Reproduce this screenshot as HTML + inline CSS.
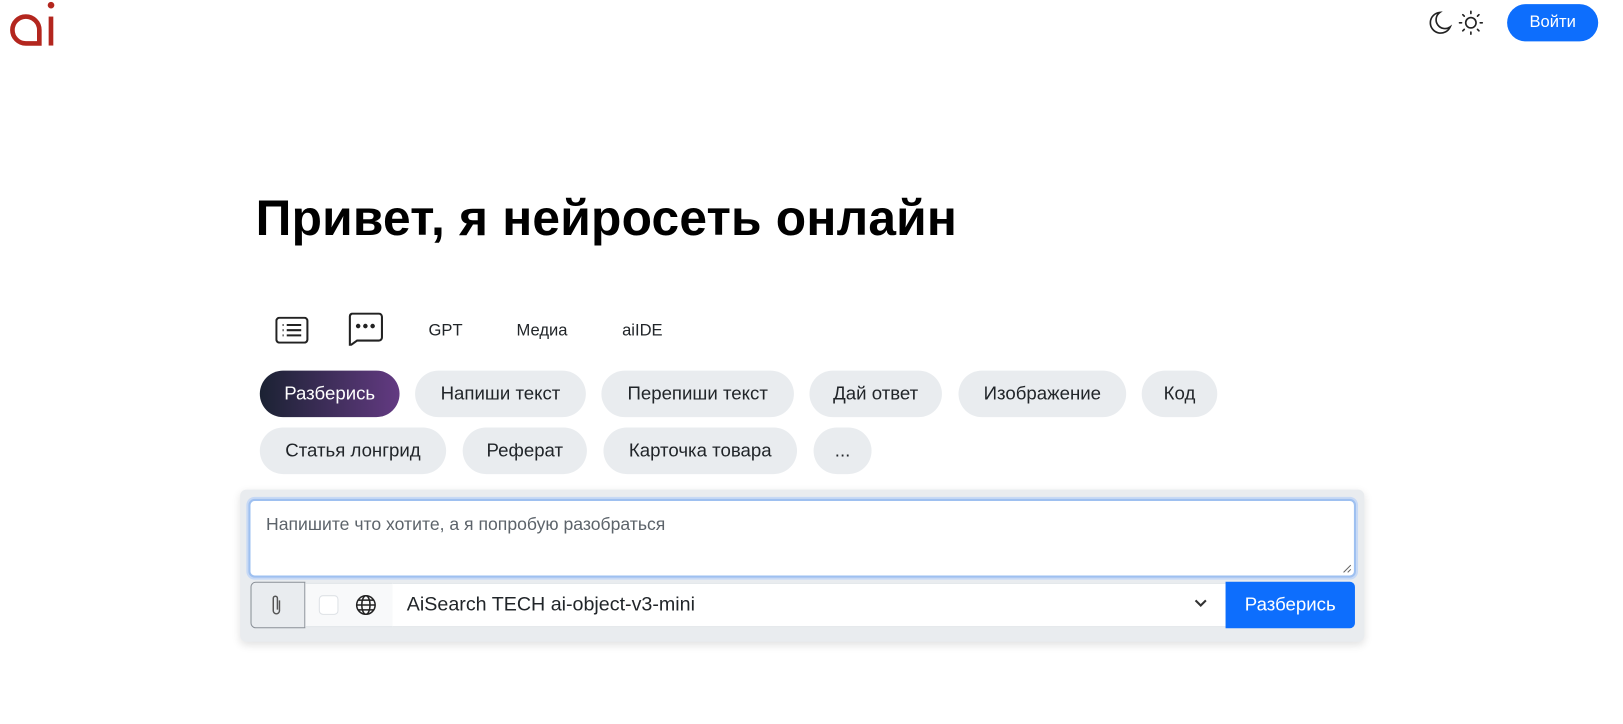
<!DOCTYPE html>
<html><head><meta charset="utf-8"><style>
*{box-sizing:border-box;margin:0;padding:0}
body{width:1623px;height:723px;background:#fff;font-family:"Liberation Sans",Arial,sans-serif;color:#212529;position:relative;overflow:hidden}
#w{position:absolute;left:0;top:0;width:1568px;height:699px;transform:scale(1.0351);transform-origin:0 0}
.abs{position:absolute}
h1{position:absolute;left:247px;top:184px;font-size:48px;font-weight:bold;color:#000;letter-spacing:0.2px}
.tab{position:absolute;top:311px;font-size:16px;color:#212529}
.pill{position:absolute;height:45px;border-radius:23px;background:#e9ecef;font-size:18px;line-height:45px;text-align:center;color:#212529}
.login{position:absolute;left:1456px;top:4px;height:36px;border-radius:18px;background:#0d6efd;color:#fff;font-size:16px;line-height:36px;text-align:center}
</style></head><body><div id="w">
<svg class="abs" style="left:8px;top:0" width="48" height="46" viewBox="0 0 48 46">
<path d="M21 42 H17 A13 13 0 1 1 30 29 V42 Z" fill="none" stroke="#b3261e" stroke-width="4.5"/>
<rect x="39" y="16" width="4.5" height="28" fill="#b3261e"/>
<circle cx="41.3" cy="5" r="3.2" fill="#b3261e"/>
</svg>
<svg class="abs" style="left:1380px;top:10px" width="24" height="24" viewBox="0 0 24 24" fill="none" stroke="#222" stroke-width="1.6"><path d="M11 2 A10 10 0 1 0 21 16 A8 8 0 0 1 11 2Z"/></svg>
<svg class="abs" style="left:1409px;top:10px" width="24" height="24" viewBox="0 0 24 24" fill="none" stroke="#222" stroke-width="1.6" stroke-linecap="round"><circle cx="12" cy="12" r="5"/><path d="M12 1v2M12 21v2M1 12h2M21 12h2M4.2 4.2l1.4 1.4M18.4 18.4l1.4 1.4M4.2 19.8l1.4-1.4M18.4 5.6l1.4-1.4"/></svg>
<div class="login" style="width:88px">Войти</div>
<h1>Привет, я нейросеть онлайн</h1>
<svg class="abs" style="left:266px;top:306px" width="32" height="26" viewBox="0 0 32 26" fill="none" stroke="#222" stroke-width="2"><rect x="1" y="1" width="30" height="24" rx="3"/><path d="M7 8h1M7 13h1M7 18h1M11 8h14M11 13h14M11 18h14"/></svg>
<svg class="abs" style="left:336px;top:302px" width="34" height="32" viewBox="0 0 34 32" fill="none" stroke="#222" stroke-width="2"><path d="M4 1h26a3 3 0 0 1 3 3v20a3 3 0 0 1-3 3H9l-7 5V4a3 3 0 0 1 2-3z"/><circle cx="10" cy="13" r="1.2" fill="#222"/><circle cx="17" cy="13" r="1.2" fill="#222"/><circle cx="24" cy="13" r="1.2" fill="#222"/></svg>
<div class="tab" style="left:414px">GPT</div>
<div class="tab" style="left:499px">Медиа</div>
<div class="tab" style="left:601px">aiIDE</div>
<div class="pill" style="left:251px;top:358px;width:135px;background:linear-gradient(90deg,#1b2233,#633a82);color:#fff">Разберись</div>
<div class="pill" style="left:401px;top:358px;width:165px">Напиши текст</div>
<div class="pill" style="left:581px;top:358px;width:186px">Перепиши текст</div>
<div class="pill" style="left:782px;top:358px;width:128px">Дай ответ</div>
<div class="pill" style="left:926px;top:358px;width:162px">Изображение</div>
<div class="pill" style="left:1103px;top:358px;width:73px">Код</div>
<div class="pill" style="left:251px;top:413px;width:180px">Статья лонгрид</div>
<div class="pill" style="left:447px;top:413px;width:120px">Реферат</div>
<div class="pill" style="left:583px;top:413px;width:187px">Карточка товара</div>
<div class="pill" style="left:786px;top:413px;width:56px">...</div>
<div class="abs" style="left:232px;top:473px;width:1086px;height:147px;background:#e9ecef;border-radius:6px;box-shadow:0 3px 8px rgba(0,0,0,0.12)"></div>
<div class="abs" style="left:240px;top:482px;width:1070px;height:76px;background:#fff;border:2px solid #9ec0f0;border-radius:6px;box-shadow:0 0 0 2px #c7d9f5"></div>
<div class="abs" style="left:257px;top:497px;font-size:17px;color:#5c636a">Напишите что хотите, а я попробую разобраться</div>
<svg class="abs" style="left:1297px;top:545px" width="9" height="9" viewBox="0 0 9 9" stroke="#666"><path d="M1 8L8 1M5 8L8 5"/></svg>
<div class="abs" style="left:242px;top:562px;width:53px;height:45px;background:#e9ecef;border:1px solid #8a9097;border-radius:5px 0 0 5px"></div>
<svg class="abs" style="left:261px;top:574px" width="12" height="22" viewBox="0 0 12 22" fill="none" stroke="#555" stroke-width="1.4"><path d="M9 6v10a3 3 0 0 1-6 0V4a2 2 0 0 1 4 0v11"/></svg>
<div class="abs" style="left:295px;top:563px;width:84px;height:43px;background:#f8f9fa;border-top:1px solid #dee2e6;border-bottom:1px solid #dee2e6"></div>
<div class="abs" style="left:308px;top:575px;width:19px;height:19px;border:1px solid #dee2e6;border-radius:4px;background:#fff"></div>
<svg class="abs" style="left:343px;top:574px" width="21" height="21" viewBox="0 0 20 20" fill="none" stroke="#222" stroke-width="1.4"><circle cx="10" cy="10" r="8.5"/><ellipse cx="10" cy="10" rx="3.8" ry="8.5"/><path d="M1.5 10h17M3 5.5h14M3 14.5h14"/></svg>
<div class="abs" style="left:379px;top:563px;width:805px;height:43px;background:#fff;border-top:1px solid #dee2e6;border-bottom:1px solid #dee2e6"></div>
<div class="abs" style="left:393px;top:574px;font-size:19px;color:#212529">AiSearch TECH ai-object-v3-mini</div>
<svg class="abs" style="left:1153px;top:578px" width="14" height="10" viewBox="0 0 14 10" fill="none" stroke="#333" stroke-width="2"><path d="M2 2l5 5 5-5"/></svg>
<div class="abs" style="left:1184px;top:562px;width:125px;height:45px;background:#0d6efd;border-radius:0 5px 5px 0;color:#fff;font-size:18px;line-height:45px;text-align:center">Разберись</div>
</div></body></html>
